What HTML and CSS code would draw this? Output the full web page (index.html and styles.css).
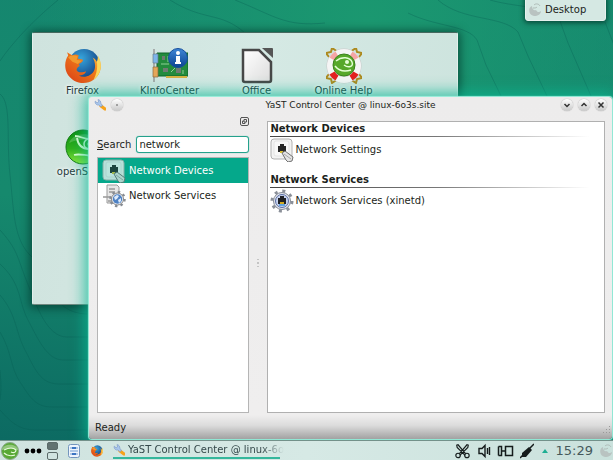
FILE: index.html
```html
<!DOCTYPE html>
<html lang="en">
<head>
<meta charset="utf-8">
<title>Desktop</title>
<link rel="stylesheet" href="styles.css">
</head>
<body>
<svg class="defs" aria-hidden="true">
  <defs>
    <linearGradient id="gGreen" x1="0" y1="0" x2="0" y2="1"><stop offset="0" stop-color="#0c8f10"/><stop offset=".55" stop-color="#2fb01c"/><stop offset="1" stop-color="#8ee83c"/></linearGradient>
    <linearGradient id="gFox" x1="0" y1="1" x2="1" y2="0"><stop offset="0" stop-color="#d93b17"/><stop offset=".6" stop-color="#ef7a1a"/><stop offset="1" stop-color="#fbd04c"/></linearGradient>
    <radialGradient id="gSea" cx=".4" cy=".3" r=".8"><stop offset="0" stop-color="#36a6dd"/><stop offset="1" stop-color="#0f2f73"/></radialGradient>
    <linearGradient id="gPage" x1="0" y1="0" x2="1" y2="1"><stop offset="0" stop-color="#fff"/><stop offset="1" stop-color="#dcdcdc"/></linearGradient>
    <linearGradient id="gInfo" x1="0" y1="0" x2="0" y2="1"><stop offset="0" stop-color="#3f86d6"/><stop offset="1" stop-color="#0a4391"/></linearGradient>
    <symbol id="firefox" viewBox="0 0 34 34">
      <circle cx="18" cy="16" r="15" fill="url(#gSea)"/>
      <path d="M31 7c5 9 3 18-4 23-8 6-20 3-25-6-3-6-2-13 1-17L2 4l5 3c2-1 4-1 6 0l-1 3 5 1c0 2-2 3-4 4l1 2c-2 1-3 2-3 4 2 3 6 2 9 1-1 3-4 4-7 4 5 3 13 0 15-6 1-4 0-8-2-11 3 1 4 4 5 6 1-3 1-6 0-8z" fill="url(#gFox)"/>
      <path d="M31 7c5 9 3 18-4 23 3-6 4-12 3-17 1-2 1-4 1-6z" fill="#fbd65a"/>
      <path d="M3 9c2-2 6-3 9-1l-1 3 5 1-4 3-5-2z" fill="#f29a2e"/>
    </symbol>
    <symbol id="wrench" viewBox="0 0 12 12">
      <path d="M7 7l4 3" stroke="#f6a21b" stroke-width="3.2" stroke-linecap="round"/>
      <path d="M1 2.500C1 5 3 6.500 5 6l2 2 1.500-2L6.800 4.500C7 2.500 6 .8 4 .6l.6 2.200L3 4 1.600 2.200z" fill="#a9c6ec" stroke="#7896c4" stroke-width=".6"/>
    </symbol>
    <symbol id="gecko" viewBox="0 0 36 36">
      <circle cx="18" cy="18" r="17" fill="url(#gGreen)" stroke="#117a12"/>
      <path d="M4 14C7 4 27 1 32 13 22 9 12 10 4 14z" fill="#fff" opacity=".2"/>
      <path d="M10 7c5 0 9 3 14 3M12 9c1 7 5 11 12 11M9 26c7-2 14 2 22 0" fill="none" stroke="#dfffd0" stroke-width="1.800"/>
      <circle cx="24" cy="15" r="5" fill="none" stroke="#dfffd0" stroke-width="1.500"/><circle cx="24.500" cy="15" r="2" fill="#dfffd0"/>
    </symbol>
    <symbol id="menu-gecko" viewBox="0 0 18 18">
      <circle cx="9" cy="9" r="8.500" fill="#58a935" stroke="#8ba98a"/>
      <path d="M1 8C2 1 16 1 17 8c-5-2-10-2-16 0z" fill="#fff" opacity=".35"/>
      <path d="M3 8c4-2 9-3 12 0 0 3-3 3-5 2M3 11c3 3 8 3 11 2" fill="none" stroke="#e8fbdc" stroke-width="1.200"/>
    </symbol>
    <symbol id="port" viewBox="0 0 24 24">
      <rect x="1" y="1" width="21" height="20" rx="3" fill="#f3f3f3" stroke="#b1b1b1"/>
      <rect x="4" y="3" width="15" height="15" rx="2" fill="#fff" fill-opacity=".45" stroke="#ddd" stroke-opacity=".7"/>
      <path d="M8 8h2V6h4v2h2v6H8z" fill="#262626"/>
      <path d="M10 13h3v2h-3z" fill="#d7bd35"/>
      <path d="M12 15l3-2 8 6-1 4-4 1-2-2z" fill="#e4e4e4" stroke="#717171"/>
      <path d="M14 16l7 5" stroke="#999" stroke-width=".8"/>
    </symbol>
    <symbol id="cable-gear" viewBox="0 0 24 24">
      <circle cx="12" cy="12" r="10" fill="none" stroke="#8b9099" stroke-width="3" stroke-dasharray="3 4.850"/>
      <circle cx="12" cy="12" r="8.500" fill="#e3e6ec" stroke="#858b96"/>
      <circle cx="12" cy="12" r="6.500" fill="#c9d5ef" stroke="#5a6da6"/>
      <path d="M8 9h2V7h4v2h2v6H8z" fill="#1f2126"/><path d="M10 13h4v2h-4z" fill="#d3aa20"/><path d="M9 15h6v2H9z" fill="#62a3de"/>
    </symbol>
    <symbol id="server" viewBox="0 0 24 24">
      <path d="M5 1h10l2 2v16H5z" fill="#e7e7e7" stroke="#9b9b9b"/>
      <path d="M7 5h6M7 8h6M1 13h8M6 17h5" stroke="#999" stroke-width="1.500"/>
      <circle cx="15.500" cy="15" r="7" fill="none" stroke="#868b93" stroke-width="2.500" stroke-dasharray="2.400 3.100"/>
      <circle cx="15.500" cy="15" r="6" fill="#e9edf3" stroke="#888"/>
      <circle cx="15.500" cy="15" r="4.700" fill="#4f82c4"/>
      <path d="M12 13l3-2 2 1-2 3-2 1zM16 16l3-2v3l-2 2z" fill="#dceafb"/>
    </symbol>
    <symbol id="cashew" viewBox="0 0 14 14">
      <path d="M4 3C0 4 0 12 6 13c4 0 7-2 7-5-2 2-4 1-5-1-2 1-4-1-4-4z" fill="#b9c3c1"/><path d="M6 2c2-2 5-1 6 1M5 5c2 0 3 0 4-1" fill="none" stroke="#aebab6"/>
    </symbol>
  </defs>
</svg>

<main class="desktop">
  <svg class="wallpaper" viewBox="0 0 613 440" preserveAspectRatio="none" aria-hidden="true">
    <g fill="none" stroke="#075b50" stroke-opacity=".32">
      <path d="M0 61C10 46 30 23 58 0M0 94c12 9 6 45 10 81s3 65 22 82 16 56 55 57"/>
      <path d="M0 230c18 20 17 27 27 52s20 55 40 55h22M0 264c22 20 18 37 28 56s19 40 35 40h26"/>
      <path d="M0 295c17 20 15 36 25 55s15 34 34 34h30M0 332c12 20 10 35 20 50s15 25 32 25h37M0 370c0 5 2 15 0 30M0 410c10 11 18 20 35 20h54"/>
      <path d="M170 0c35 22 50 11 75 33M235 0c40 16 50 27 90 23M408 13c28 14 60 12 69 27l9 25 15 31M438 0c25 22 65 15 80 32l10 24 19 40M490 0c25 7 45 5 55 14M560 21l8 22 23 53M605 22l9 23"/>
    </g>
  </svg>

  <section class="folder" aria-label="Desktop folder">
    <a class="launcher" href="#"><svg class="launcher-icon"><use href="#firefox"/></svg>Firefox</a>
    <a class="launcher" href="#"><svg class="launcher-icon" viewBox="0 0 36 36">
      <path d="M2 1v33" stroke="#999" stroke-width="1.500"/>
      <path d="M5 5h31v23H5z" fill="#238b3d"/><path d="M5 5h31v23H5z" fill="none" stroke="#0e642a"/>
      <path d="M14 28h21v2H14z" fill="#d5b243"/>
      <path d="M1 6h5v9H1z" fill="#7db5ea" stroke="#697b8f" stroke-width=".7"/><path d="M1 19h5v10H1z" fill="#e5a659" stroke="#8b6b42" stroke-width=".7"/>
      <path d="M10 8h3v4h-3zM11 20h5v4h-5zM24 20h5v5h-5z" fill="#6f7a71"/><path d="M16 8v6M9 16h8M19 24l4-4M31 22v4" stroke="#8fd096"/>
      <circle cx="26" cy="10" r="9.500" fill="url(#gInfo)" stroke="#174f9d"/><circle cx="26" cy="5" r="2" fill="#fff"/><path d="M24 8h4v6h1v2h-6v-2h1z" fill="#fff"/>
    </svg>KInfoCenter</a>
    <a class="launcher" href="#"><svg class="launcher-icon" viewBox="0 0 36 36">
      <path d="M4 2h16l12 12v18q0 2-2 2H6q-2 0-2-2V2z" fill="url(#gPage)" stroke="#474747" stroke-width="2.500"/><path d="M23 0h10q1 0 1 1v9z" fill="#555"/>
    </svg>Office</a>
    <a class="launcher" href="#"><svg class="launcher-icon" viewBox="0 0 36 36">
      <path d="M3 9l-3-4 5-1 1-4 6 4M24 4l6-4 1 4 5 1-3 4M3 26l-3 4 5 1 1 4 6-4M24 31l6 4 1-4 5-1-3-4" fill="none" stroke="#ad8a1f" stroke-width="2"/>
      <circle cx="18" cy="18" r="14" fill="none" stroke="#c9c9c9" stroke-width="7"/><circle cx="18" cy="18" r="14" fill="none" stroke="#f5f5f5" stroke-width="6"/>
      <path d="M6 11a14 14 0 0 1 5-5M25 6a14 14 0 0 1 5 5" fill="none" stroke="#f6a5a5" stroke-width="6"/>
      <path d="M6 25a14 14 0 0 0 5 5M25 30a14 14 0 0 0 5-5" fill="none" stroke="#e32020" stroke-width="6"/>
      <circle cx="18" cy="17" r="11" fill="#56a829" stroke="#3c831e"/>
      <path d="M10 13c6-5 14-4 16 1s-4 6-8 3M9 18c4 5 10 6 16 4" fill="none" stroke="#e4ffd4" stroke-width="1.500"/><circle cx="21" cy="14" r="2" fill="#e4ffd4"/>
    </svg>Online Help</a>
    <a class="launcher" href="#"><svg class="launcher-icon"><use href="#gecko"/></svg>openSUSE</a>
  </section>

  <button class="toolbox"><svg class="cashew"><use href="#cashew"/></svg>Desktop</button>

  <section class="window" aria-label="YaST Control Center">
    <header class="titlebar">
      <div class="controls">
        <svg class="small-icon"><use href="#wrench"/></svg>
        <button class="round" aria-label="On all desktops"><svg viewBox="0 0 12 12"><path d="M5.500 6h1"/></svg></button>
      </div>
      <h1 class="title">YaST Control Center @ linux-6o3s.site</h1>
      <div class="controls end">
        <button class="round" aria-label="Minimize"><svg viewBox="0 0 12 12"><path d="M3.500 5L6 7.500 8.500 5"/></svg></button>
        <button class="round" aria-label="Maximize"><svg viewBox="0 0 12 12"><path d="M3.500 7L6 4.500 8.500 7"/></svg></button>
        <button class="round" aria-label="Close"><svg viewBox="0 0 12 12"><path d="M3.500 3.500l5 5m0-5l-5 5"/></svg></button>
      </div>
    </header>
    <div class="content">
      <aside class="sidebar">
        <button class="float" aria-label="Float"><svg viewBox="0 0 9 9"><path d="M1 .5h6q1.500 0 1.500 1.500v5q0 1.500-1.500 1.500H2Q.5 8.500.5 7V2Q.5.500 2 .5zM4 2.500h2.500V5H4zM4 4H2.500v2.500H5V5"/></svg></button>
        <div class="search"><label for="q"><u>S</u>earch</label><input id="q" type="text" value="network"></div>
        <nav class="list">
          <a class="item selected" href="#"><svg class="item-icon"><use href="#port"/></svg>Network Devices</a>
          <a class="item" href="#"><svg class="item-icon"><use href="#server"/></svg>Network Services</a>
        </nav>
      </aside>
      <div class="splitter"></div>
      <div class="modules">
        <section class="group"><h2>Network Devices</h2><a class="module" href="#"><svg class="item-icon"><use href="#port"/></svg>Network Settings</a></section>
        <section class="group"><h2>Network Services</h2><a class="module" href="#"><svg class="item-icon"><use href="#cable-gear"/></svg>Network Services (xinetd)</a></section>
      </div>
    </div>
    <footer class="status">Ready<span class="grip"></span></footer>
  </section>
</main>

<footer class="panel">
  <button class="plain" aria-label="Menu"><svg class="menu-icon"><use href="#menu-gecko"/></svg></button>
  <button class="plain" aria-label="Activities"><svg class="dots" viewBox="0 0 18 6"><circle cx="3" cy="3" r="2.400"/><circle cx="9" cy="3" r="2.400"/><circle cx="15" cy="3" r="2.400"/></svg></button>
  <div class="pager"><span class="desk current"></span><span class="desk"></span></div>
  <button class="plain files" aria-label="Files"><svg viewBox="0 0 12 14"><rect x=".5" y=".5" width="11" height="13" rx="2" fill="#eef4fc" stroke="#7295bd"/><path d="M2 4h8M2 7h8M2 10h8" stroke="#6d9ad0" stroke-width="1.200"/><path d="M4 3h4v2H4zM4 9h4v2H4z" fill="#3b74c2"/></svg></button>
  <button class="plain browser" aria-label="Firefox"><svg class="small-icon"><use href="#firefox"/></svg></button>
  <button class="task"><svg class="small-icon"><use href="#wrench"/></svg><span class="task-name">YaST Control Center @ linux-6o</span></button>
  <div class="tray">
    <button class="plain" aria-label="Clipboard"><svg class="tray-icon" viewBox="0 0 18 18"><g fill="none" stroke="#151c1c" stroke-width="1.300"><circle cx="4" cy="14" r="2.500"/><circle cx="14" cy="14" r="2.500"/><path d="M5.500 12L14 2l1.500.5L15 5l-9 9M12.500 12L4 2l-1.500.5L3 5l9 9"/></g></svg></button>
    <button class="plain" aria-label="Volume"><svg class="tray-icon narrow" viewBox="0 0 14 16"><path d="M2 5.500h3l3-3v11l-3-3H2zM10.500 5v6M12.500 4v8" fill="none" stroke="#151c1c" stroke-width="1.400"/></svg></button>
    <button class="plain" aria-label="Network"><svg class="tray-icon" viewBox="0 0 17 16"><path d="M1.500 3.500v9M1.500 12.500h3v-9h-3M4.500 8h4M8.500 3.500h7v9h-7z" fill="none" stroke="#151c1c" stroke-width="1.500"/></svg></button>
    <button class="plain" aria-label="Device"><svg class="tray-icon narrow" viewBox="0 0 14 16"><path d="M0 15l4-4M9 6l5-5" stroke="#151c1c" stroke-width="1.500"/><path d="M2 10l7-6 3 3-6 7-4 0z" fill="#151c1c"/></svg></button>
    <button class="plain" aria-label="Show hidden"><svg class="arrow" viewBox="0 0 6 4"><path d="M0 4l3-4 3 4z" fill="#1fae93"/></svg></button>
    <time class="clock">15:29</time>
    <svg class="cashew"><use href="#cashew"/></svg>
  </div>
</footer>
</body>
</html>
```
FILE: styles.css
```css
* { box-sizing: border-box; }
html, body { height: 100%; }
body {
  margin: 0;
  display: flex;
  flex-direction: column;
  overflow: hidden;
  font: 10px/14px "DejaVu Sans", sans-serif;
  color: #1c1f20;
}
button { font: inherit; color: inherit; padding: 0; border: 0; background: none; }
a { color: inherit; text-decoration: none; }
svg { display: block; flex: none; }
.defs { position: absolute; width: 0; height: 0; }

.desktop {
  position: relative;
  flex: 1;
  min-height: 0;
  background:
    radial-gradient(ellipse at 60% 5%, #1b9870, rgba(27, 152, 112, 0) 65%),
    linear-gradient(185deg, #15866f, #16896d 50%, #0c6a62);
}
.wallpaper { width: 100%; height: 100%; }

/* Folder view on the desktop */
.folder {
  position: absolute;
  left: 32px;
  top: 32px;
  right: 155px;
  height: 273px;
  padding: 13px 6px;
  display: grid;
  grid-template-columns: repeat(auto-fill, 87px);
  grid-auto-rows: 81px;
  align-content: start;
  background: linear-gradient(100deg, #cfe3de, #d5e9e4 50%, #cce3dd);
  border: 1px solid #e3efeb;
  border-top-color: #46695f;
  border-bottom-color: #70877f;
  border-radius: 2px;
  box-shadow: 0 1px 10px 2px rgba(0, 45, 36, .65);
}
.launcher {
  display: flex;
  flex-direction: column;
  align-items: center;
  justify-content: space-between;
  height: 51px;
  color: #24383a;
  text-shadow: 0 0 4px #fff, 0 0 3px #fff;
}
.launcher-icon { width: 36px; height: 36px; margin-top: 2px; }

.toolbox {
  position: absolute;
  right: 7px;
  top: -4px;
  width: 81px;
  height: 25px;
  padding: 3px 2px 0;
  display: flex;
  align-items: center;
  gap: 3px;
  background: #d5e8e3;
  border: 1px solid #e7f1ee;
  border-radius: 3px;
  box-shadow: 0 1px 5px 1px rgba(0, 45, 36, .7);
}
.cashew { width: 14px; height: 14px; }

/* Application window */
.window {
  position: absolute;
  left: 89px;
  top: 97px;
  right: 1px;
  bottom: 1px;
  display: flex;
  flex-direction: column;
  background: linear-gradient(#edecec, #efeeee 93%, #dcdcdc 96%, #a2a2a2);
  border-radius: 3px;
  box-shadow: 0 0 1px 1px #a0f0de, 0 0 15px 4px rgba(10, 184, 148, .8);
}
.titlebar {
  display: flex;
  align-items: center;
  height: 16px;
  padding: 0 5px;
}
.title { flex: 1; margin: 0; font-size: 9px; font-weight: 400; text-align: center; }
.small-icon { width: 12px; height: 12px; }
.controls { display: flex; gap: 5px; width: 48px; }
.controls.end { justify-content: flex-end; }
.round {
  width: 12px;
  height: 12px;
  border-radius: 50%;
  background: linear-gradient(#fff, #c8c8c8);
  box-shadow: 0 0 1px #777;
}
.round path { fill: none; stroke: #333; stroke-width: 1.5; }
.content { flex: 1; min-height: 0; display: flex; padding: 0 7px 0 8px; }
.sidebar { flex: 0 0 30%; min-width: 0; display: flex; flex-direction: column; padding-top: 4px; }
.float { width: 9px; height: 9px; align-self: flex-end; }
.float path { fill: none; stroke: #555; }
.search { display: flex; align-items: center; gap: 5px; margin: 10px 0 4px; }
.search input {
  flex: 1;
  min-width: 0;
  height: 17px;
  padding: 0 2px;
  border: 1px solid #25a18c;
  border-radius: 3px;
  background: #fff;
  font: inherit;
  color: inherit;
  outline: 0;
  box-shadow: 0 0 1px #43b8a3;
}
.list { flex: 1; border: 1px solid #b5b5b5; background: #fff; }
.item { display: flex; align-items: center; gap: 3px; height: 25px; padding-left: 4px; }
.item.selected { background: #05a88b; color: #fff; }
.selected .item-icon { opacity: .75; }
.item-icon { width: 24px; height: 24px; }
.splitter {
  flex: 0 0 18px;
  align-self: center;
  height: 8px;
  padding: 0 8px;
  background: radial-gradient(circle, #c4c4c4 1px, transparent 1px) center / 4px 4px;
  background-clip: content-box;
}
.modules { flex: 1; margin-top: 8px; padding: 0 2px; border: 1px solid #b0b0b0; background: #fff; }
.group { height: 51px; }
.group h2 {
  margin: 0;
  font-size: 10px;
  line-height: 14px;
  border-bottom: 1px solid;
  border-image: linear-gradient(90deg, #444, #777 50%, transparent 96%) 1;
}
.module { display: flex; align-items: center; gap: 1px; height: 26px; }
.status { display: flex; justify-content: space-between; height: 26px; padding: 8px 2px 0 6px; }
.grip {
  width: 8px;
  height: 8px;
  margin-top: 4px;
  background: radial-gradient(circle, #999 1px, transparent 1px) 0 0 / 3px 3px;
  clip-path: polygon(100% 0, 100% 100%, 0 100%);
}

/* Bottom panel */
.panel {
  position: relative;
  display: flex;
  align-items: center;
  height: 20px;
  padding-left: 1px;
  gap: 5px;
  background: linear-gradient(90deg, #cfe3df, #d6e9e5 50%, #cae1dc);
  border-top: 1px solid #73918a;
}
.menu-icon { width: 18px; height: 18px; }
.dots { width: 18px; height: 6px; }
.pager { display: flex; flex-direction: column; gap: 2px; }
.desk { width: 11px; height: 8px; border: 1px solid #5b6b69; border-radius: 2px; }
.desk.current { background: #627371; }
.files { padding-left: 5px; }
.files svg { width: 12px; height: 14px; }
.browser { margin-left: 6px; }
.task {
  display: flex;
  align-items: center;
  gap: 3px;
  width: 167px;
  height: 17px;
  margin-left: 5px;
  border-bottom: 2px solid #35b79c;
}
.task-name {
  flex: 1;
  white-space: nowrap;
  text-align: left;
  color: #34484a;
  mask-image: linear-gradient(90deg, #000 85%, transparent);
}
.tray { display: flex; align-items: center; gap: 6px; margin-left: auto; }
.tray-icon { width: 17px; height: 16px; }
.tray-icon.narrow { width: 14px; }
.arrow { width: 6px; height: 4px; margin: 0 2px; }
.clock { font-size: 13px; line-height: 19px; color: #45595b; }
```
